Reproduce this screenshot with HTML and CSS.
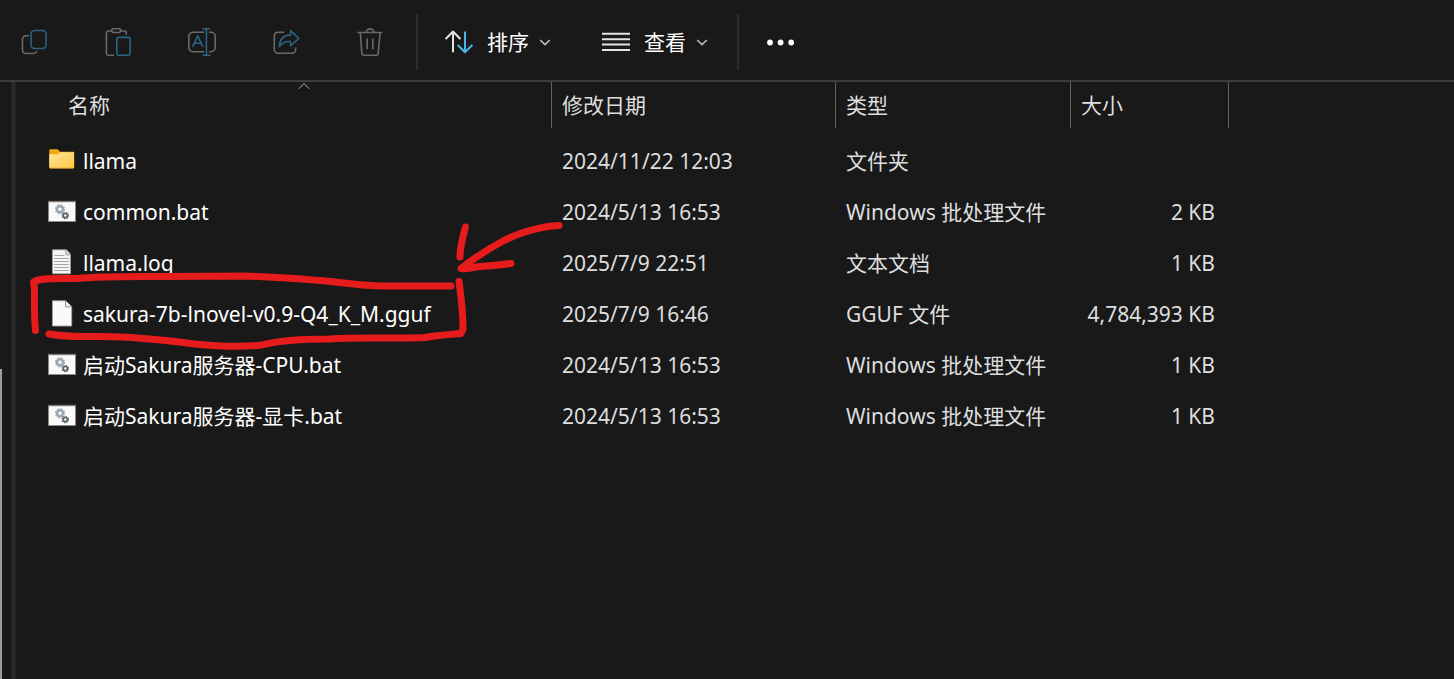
FILE: index.html
```html
<!DOCTYPE html>
<html lang="zh-CN">
<head>
    <meta charset="UTF-8">
    <meta name="viewport" content="width=device-width, initial-scale=1.0">
    <title>sakura</title>
    <link rel="stylesheet" href="styles.css">
</head>
<body>

  <!-- shared file icons -->
  <svg class="sprite" aria-hidden="true">
    <defs>
      <linearGradient id="folder-fill" x1="0" y1="0" x2="1" y2="1">
        <stop offset="0" stop-color="#ffe7a0"/>
        <stop offset="1" stop-color="#fdc63c"/>
      </linearGradient>
      <symbol id="icon-bat" viewBox="0 1 28 28">
        <rect x="0.5" y="4.5" width="27" height="20" fill="#fafafa" stroke="#8b8984"/>
        <path d="M0 4.5h28" stroke="#77756f" stroke-width="1.4"/>
        <circle cx="12" cy="12.3" r="3" fill="none" stroke="#9aa6b0" stroke-width="2.4"/>
        <circle cx="12" cy="12.3" r="4.4" fill="none" stroke="#9aa6b0" stroke-width="1.4" stroke-dasharray="1.8 1.65"/>
        <circle cx="17.3" cy="18.6" r="2.1" fill="none" stroke="#59636b" stroke-width="1.7"/>
        <circle cx="17.3" cy="18.6" r="3.2" fill="none" stroke="#59636b" stroke-width="1.2" stroke-dasharray="1.3 1.2"/>
      </symbol>
    </defs>
  </svg>

  <header class="toolbar">
    <button class="tool disabled" aria-label="复制">
      <svg viewBox="0 0 28 28">
        <path class="gray" d="M9 7.7H6a3.5 3.5 0 0 0-3.5 3.5V22A3.5 3.5 0 0 0 6 25.5h7.5a4 4 0 0 0 3.500-2.500"/>
        <rect class="blue" x="11" y="2.5" width="15" height="18" rx="3.5"/>
      </svg>
    </button>
    <button class="tool disabled" aria-label="粘贴">
      <svg viewBox="0 0 28 28">
        <path class="gray" d="M7.5 3H4a1.6 1.6 0 0 0-1.6 1.6v21A1.6 1.6 0 0 0 4 27.2h6M17 3h3.7a1.6 1.6 0 0 1 1.6 1.6v1.9"/>
        <rect class="gray" x="7.7" y="0.7" width="9" height="3.8" rx="1.9"/>
        <rect class="blue" x="12.8" y="9.4" width="13.3" height="17.8" rx="1.6"/>
      </svg>
    </button>
    <button class="tool disabled" aria-label="重命名">
      <svg viewBox="0 0 28 28">
        <path class="gray" d="M16 4.3H5A4.2 4.2 0 0 0 .8 8.5v11A4.2 4.2 0 0 0 5 23.7h11M21 4.3h2a4.2 4.2 0 0 1 4.2 4.2v11a4.2 4.2 0 0 1-4.2 4.2h-2"/>
        <path class="blue" d="M18.4 1v26M14.5 .8h8M14.5 27.2h8M4.5 18.8 9.7 7.8l5.2 11M6.3 15.3h6.8"/>
      </svg>
    </button>
    <button class="tool disabled" aria-label="共享">
      <svg viewBox="0 0 28 28">
        <path class="gray" d="M12 4.3H6A3.7 3.7 0 0 0 2.3 8v13.6A3.7 3.7 0 0 0 6 25.3h14a3.7 3.7 0 0 0 3.7-3.7v-2"/>
        <path class="blue" d="M18.6 2.6 26.8 10.3 18.6 18v-4.4C13.5 13.2 9.8 15 7.2 18.6 7.7 11.8 11.6 7.2 18.6 6.9z"/>
      </svg>
    </button>
    <button class="tool disabled" aria-label="删除">
      <svg viewBox="0 0 28 28">
        <path class="gray" d="M1.3 4.5h25M4.3 4.5l1.5 20.9a2 2 0 0 0 2 1.8h12.4a2 2 0 0 0 2-1.8l1.9-20.9M10.3 4.3a3.8 3.4 0 0 1 7.6 0M11.2 10.5v10.7M16.8 10.5v10.7"/>
      </svg>
    </button>

    <span class="separator"></span>

    <div class="tool-group">
      <button class="tool">
        <svg viewBox="0 0 28 28">
          <path class="white" d="M8 24.3V3.5M.6 11 8 3.5 15.4 11"/>
          <path class="bright" d="M20 3.5v20.8M12.6 17l7.4 7.3 7.4-7.3"/>
        </svg>
        <span>排序</span>
        <svg class="chevron" viewBox="0 0 12 12"><path d="M1.2 4 6 8.6 10.8 4"/></svg>
      </button>
      <button class="tool">
        <svg viewBox="0 0 28 28">
          <path class="white" d="M0 5.7h28M0 11.2h28M0 16.6h28M0 22h28"/>
        </svg>
        <span>查看</span>
        <svg class="chevron" viewBox="0 0 12 12"><path d="M1.2 4 6 8.6 10.8 4"/></svg>
      </button>
    </div>

    <span class="separator"></span>

    <button class="tool" aria-label="更多">
      <svg viewBox="0 0 28 28" fill="#fff">
        <circle cx="4" cy="14.5" r="2.9"/>
        <circle cx="14.6" cy="14.5" r="2.9"/>
        <circle cx="25.2" cy="14.5" r="2.9"/>
      </svg>
    </button>
  </header>

  <div class="explorer">
    <aside class="nav"><div class="nav-scroll"></div></aside>

    <main class="files">
      <table>
        <colgroup>
          <col class="col-name">
          <col class="col-date">
          <col class="col-type">
          <col class="col-size">
        </colgroup>
        <thead>
          <tr>
            <th class="name-head">名称
              <svg class="sort-mark" viewBox="0 0 12 8"><path d="M.8 6.8 6 1.6l5.2 5.2"/></svg>
            </th>
            <th>修改日期</th>
            <th>类型</th>
            <th>大小</th>
          </tr>
        </thead>
        <tbody>
          <tr>
            <td><div class="name">
              <svg viewBox="0 1 28 28">
                <path d="M1.3 4.2a1 1 0 0 1 1-1h7.2l2.6 2.6h13a1 1 0 0 1 1 1V21H1.3z" fill="#f3a90f"/>
                <path d="M1.3 8.2h8.6l2-1.900h14.2v15a1 1 0 0 1-1 1H2.3a1 1 0 0 1-1-1z" fill="url(#folder-fill)"/>
                <path d="M1.8 22.2h23.8" stroke="#e0a01c" stroke-width=".8"/>
              </svg>
              <span>llama</span></div></td>
            <td>2024/11/22 12:03</td>
            <td>文件夹</td>
            <td></td>
          </tr>
          <tr>
            <td><div class="name"><svg><use href="#icon-bat"/></svg><span>common.bat</span></div></td>
            <td>2024/5/13 16:53</td>
            <td>Windows 批处理文件</td>
            <td>2 KB</td>
          </tr>
          <tr>
            <td><div class="name">
              <svg viewBox="0 1 28 28">
                <path d="M4.5 1.8h14l4 4.5v19.5h-18z" fill="#f5f5f5" stroke="#9c9a96" stroke-width=".9"/>
                <path d="M18 1.8v5h4.5" fill="#ddd" stroke="#8d8b87" stroke-width=".9"/>
                <path d="M6.2 7.5h10.3M6.2 10.5h14.6M6.2 13.5h14.6M6.2 16.5h14.6M6.2 19.5h14.6M6.2 22.5h14.6" stroke="#a6a6a6"/>
              </svg>
              <span>llama.log</span></div></td>
            <td>2025/7/9 22:51</td>
            <td>文本文档</td>
            <td>1 KB</td>
          </tr>
          <tr>
            <td><div class="name">
              <svg viewBox="0 1 28 28">
                <path d="M4.5 1.8h13l6.2 6V27H4.5z" fill="#fafafa" stroke="#a3a19d" stroke-width=".9"/>
                <path d="M17.5 1.8v6h6.2" fill="#eee" stroke="#8d8b87" stroke-width=".9"/>
              </svg>
              <span>sakura-7b-lnovel-v0.9-Q4_K_M.gguf</span></div></td>
            <td>2025/7/9 16:46</td>
            <td>GGUF 文件</td>
            <td>4,784,393 KB</td>
          </tr>
          <tr>
            <td><div class="name"><svg><use href="#icon-bat"/></svg><span>启动Sakura服务器-CPU.bat</span></div></td>
            <td>2024/5/13 16:53</td>
            <td>Windows 批处理文件</td>
            <td>1 KB</td>
          </tr>
          <tr>
            <td><div class="name"><svg><use href="#icon-bat"/></svg><span>启动Sakura服务器-显卡.bat</span></div></td>
            <td>2024/5/13 16:53</td>
            <td>Windows 批处理文件</td>
            <td>1 KB</td>
          </tr>
        </tbody>
      </table>

      <!-- red pen marks -->
      <svg class="pen" viewBox="16 82 560 290" aria-hidden="true">
        <path d="M35.5 330.5C34 315 34.5 300 34.5 289L33.5 282C42 277 60 279 77 278.5C100 276 130 276.5 165 276.5L245 276C275 277 300 279 320 280.5C345 283 365 286 385 286H451"/>
        <path d="M49 334C65 337 75 336.5 95 336.5C130 336 165 340 195 344C215 346 240 347.5 262 345C280 340 300 339 330 339C360 337 395 339 425 337.5C440 334.5 450 334.5 461 333.5L463 329C463 310 461 296 459 281.5"/>
        <path d="M559 225.5C540 226 517 234 505 240C490 248 474 258 461 268.5C471 269.5 471 267 480 266.5C492 266 501 265 511 263.5"/>
        <path d="M465.5 227C463 237 460 246 460 257"/>
      </svg>
    </main>
  </div>

</body>
</html>
```
FILE: styles.css
```css
* {
    margin: 0;
    padding: 0;
    box-sizing: border-box;
}
body {
    display: flex;
    flex-direction: column;
    min-height: 100vh;
    background-color: #191919;
    color: #dedede;
    font-family: "Noto Sans", "Noto Sans CJK SC", sans-serif;
    font-size: 21px;
    line-height: 30px;
}
.sprite {
    position: absolute;
    width: 0;
    height: 0;
}

/* toolbar */
.toolbar {
    display: flex;
    align-items: center;
    height: 82px;
    padding: 4px 6px 0;
    border-bottom: 2px solid #3c3c3c;
}
.tool {
    display: flex;
    align-items: center;
    padding: 10px 14px;
    border: none;
    background: none;
    color: white;
    font: inherit;
}
.tool svg {
    width: 28px;
    height: 28px;
}
.tool span {
    margin-left: 14px;
}
.tool .chevron {
    width: 12px;
    height: 12px;
    margin-left: 10px;
}
.tool path, .tool rect {
    fill: none;
    stroke-width: 1.6;
    stroke-linejoin: round;
}
.tool.disabled {
    margin-right: 28px;
}
.tool .gray {
    stroke: #6a6a6a;
}
.tool .blue {
    stroke: #2d6382;
}
.tool .white {
    stroke: #e4e4e4;
    stroke-width: 2;
}
.tool .bright {
    stroke: #4cb4ec;
    stroke-width: 2;
}
.chevron path {
    stroke: #bdbdbd;
}
.separator {
    width: 2px;
    height: 56px;
    margin: 0 13px 0 15px;
    background-color: #2c2c2c;
}
.tool.disabled + .separator {
    margin-left: -10px;
}
.tool-group {
    display: flex;
    gap: 23px;
}

/* panes */
.explorer {
    display: flex;
    flex: 1;
}
.nav {
    display: flex;
    align-items: flex-end;
    width: 16px;
    background: linear-gradient(to right, #191919 11px, #222 11px, #2d2d2d 13px, #222 16px);
}
.nav-scroll {
    width: 2px;
    height: 52%;
    background-color: #9d9d9d;
}
.files {
    position: relative;
    flex: 1;
}

/* file list */
table {
    table-layout: fixed;
    width: 1213px;
    border-collapse: separate;
    border-spacing: 0;
}
.col-name {
    width: 536px;
}
.col-date {
    width: 284px;
}
.col-type {
    width: 235px;
}
.col-size {
    width: 158px;
}
th {
    height: 46px;
    padding-left: 10px;
    border-right: 1px solid #636363;
    font-weight: normal;
    text-align: left;
}
.name-head {
    position: relative;
    padding-left: 52px;
}
.sort-mark {
    position: absolute;
    top: 0;
    left: 282px;
    width: 12px;
    height: 8px;
    fill: none;
    stroke: #b0b0b0;
}
tbody::before {
    content: "";
    display: block;
    height: 7px;
}
td {
    height: 51px;
    padding-left: 10px;
    white-space: nowrap;
}
td:first-child {
    padding-left: 32px;
}
td:last-child {
    padding-right: 14px;
    text-align: right;
}
.name {
    display: flex;
    align-items: center;
    gap: 7px;
    color: white;
}
.name svg {
    width: 28px;
    height: 28px;
}

.pen {
    position: absolute;
    top: 0;
    left: 0;
    width: 560px;
    height: 290px;
    fill: none;
    stroke: #e61b1b;
    stroke-width: 7;
    stroke-linecap: round;
    stroke-linejoin: round;
    pointer-events: none;
}
```
